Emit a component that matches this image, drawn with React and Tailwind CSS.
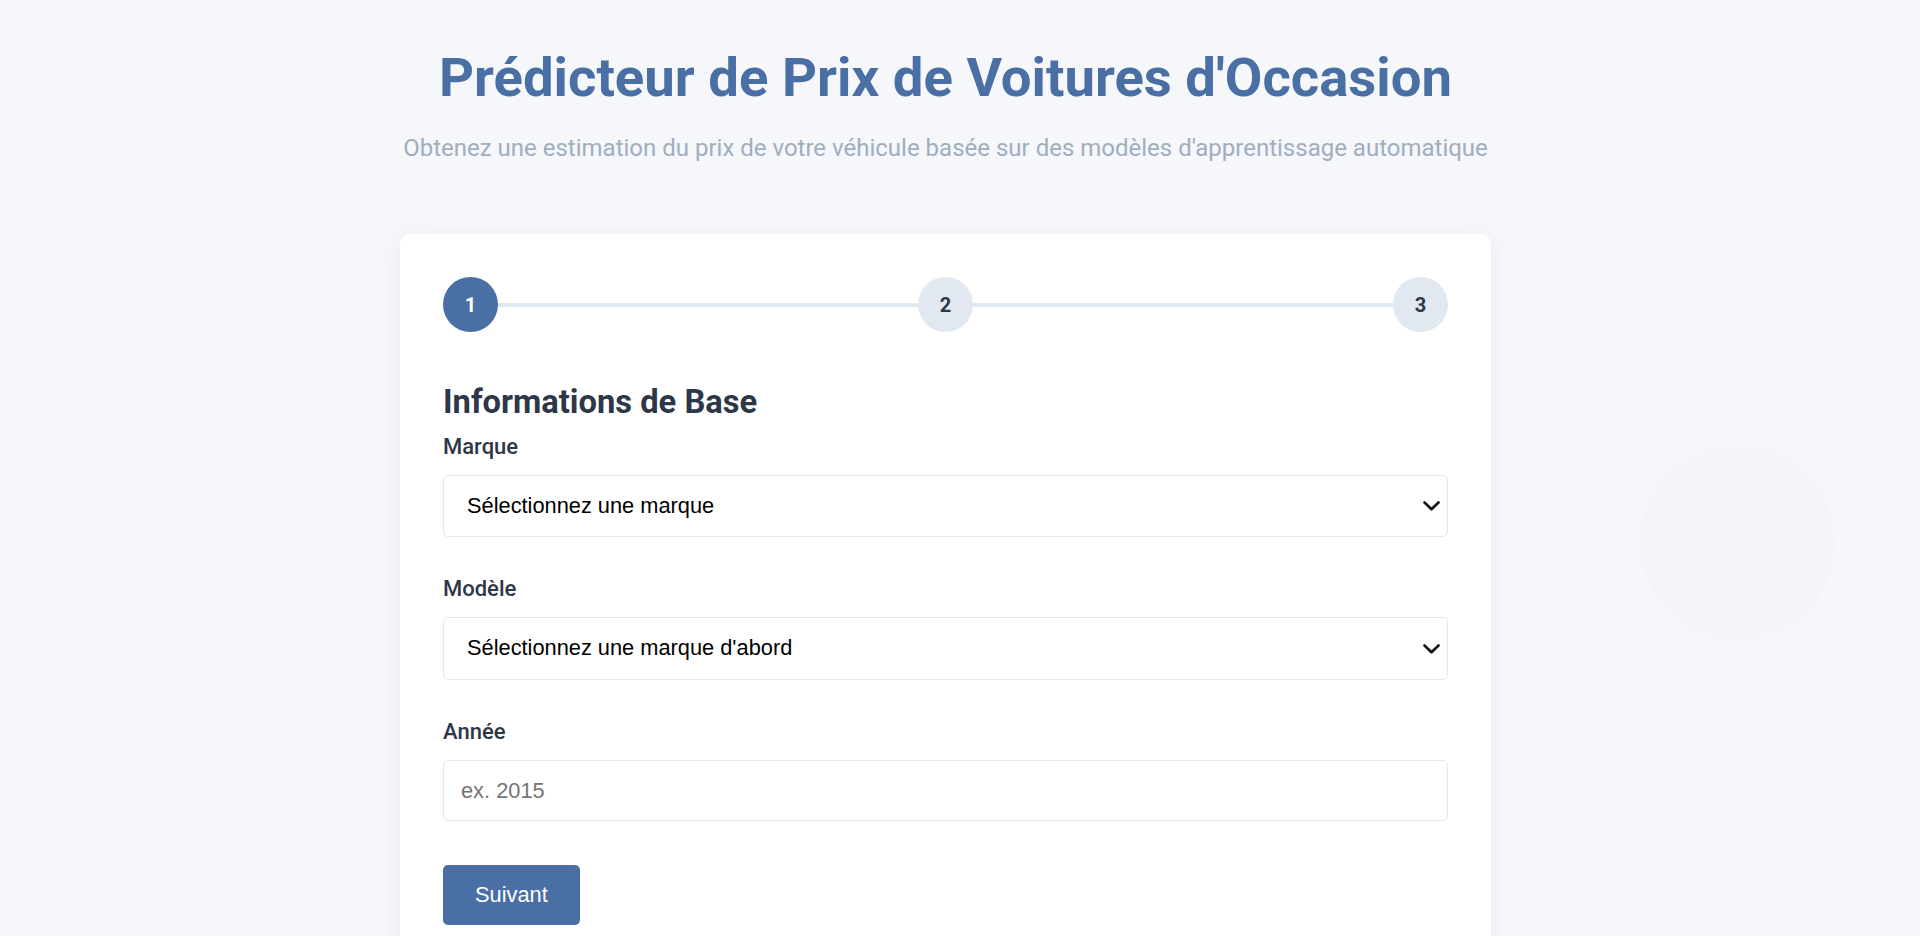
import { useState } from 'react';

const Chevron = () => (
  <svg
    className="pointer-events-none absolute right-[8px] top-1/2 -translate-y-1/2"
    width="17"
    height="10"
    viewBox="0 0 17 10"
    fill="none"
  >
    <path d="M1.5 1.5 L8.5 8.3 L15.5 1.5" stroke="#111" strokeWidth="2.6" strokeLinecap="round" strokeLinejoin="round" />
  </svg>
);

const Step = ({ n, active }) => (
  <div
    className={`w-[55px] h-[55px] shrink-0 rounded-full flex items-center justify-center text-[20px] font-bold ${
      active ? 'bg-[#4a6fa5] text-white' : 'bg-[#e2e8f0] text-[#2d3748]'
    }`}
  >
    {n}
  </div>
);

const Field = ({ label, children, className = '' }) => (
  <div className={className}>
    <label className="block text-[22px] leading-[26px] font-medium text-[#2d3748] mb-[15px]">{label}</label>
    {children}
  </div>
);

export default function App() {
  const [brand, setBrand] = useState('');
  const [model, setModel] = useState('');
  const [year, setYear] = useState('');

  return (
    <div className="relative min-h-screen overflow-hidden bg-[#f5f7fa] font-['Roboto',sans-serif]">
      {/* faint decorative blob */}
      <div className="absolute left-[1640px] top-[445px] w-[195px] h-[195px] rounded-full bg-[#f2f4f8]/60" />

      <div className="relative flex justify-center pr-[29px] pt-[44px]">
        <div className="w-[1091px] flex flex-col items-center">
          <h1 className="text-[54.5px] leading-[66px] font-bold text-[#4a6fa5] text-center whitespace-nowrap">
            Prédicteur de Prix de Voitures d'Occasion
          </h1>
          <p className="mt-[20px] text-[24px] leading-[36px] text-[#a0aec0] text-center whitespace-nowrap">
            Obtenez une estimation du prix de votre véhicule basée sur des modèles d'apprentissage automatique
          </p>

          <div className="mt-[68px] w-full bg-white rounded-[10px] shadow-[0_4px_24px_rgba(30,41,59,0.06)] px-[43px] pt-[43px] pb-[60px]">
            <div className="flex items-center">
              <Step n="1" active />
              <div className="flex-1 h-[4px] bg-[#e2e8f0]" />
              <Step n="2" />
              <div className="flex-1 h-[4px] bg-[#e2e8f0]" />
              <Step n="3" />
            </div>

            <h2 className="mt-[50px] text-[32.7px] leading-[40px] font-bold text-[#2d3748]">Informations de Base</h2>

            <Field label="Marque" className="mt-[12px]">
              <div className="relative">
                <select
                  value={brand}
                  onChange={(e) => setBrand(e.target.value)}
                  className="appearance-none w-full h-[62px] pl-[23px] pr-[40px] bg-white border border-[#e2e8f0] rounded-[5px] text-[21.8px] text-black font-['Liberation_Sans',Arial,sans-serif] outline-none"
                >
                  <option value="">Sélectionnez une marque</option>
                  <option value="toyota">Toyota</option>
                  <option value="renault">Renault</option>
                  <option value="peugeot">Peugeot</option>
                </select>
                <Chevron />
              </div>
            </Field>

            <Field label="Modèle" className="mt-[39px]">
              <div className="relative">
                <select
                  value={model}
                  onChange={(e) => setModel(e.target.value)}
                  className="appearance-none w-full h-[63px] pl-[23px] pr-[40px] bg-white border border-[#e2e8f0] rounded-[5px] text-[21.8px] text-black font-['Liberation_Sans',Arial,sans-serif] outline-none"
                >
                  <option value="">Sélectionnez une marque d'abord</option>
                </select>
                <Chevron />
              </div>
            </Field>

            <Field label="Année" className="mt-[39px]">
              <input
                type="number"
                value={year}
                onChange={(e) => setYear(e.target.value)}
                placeholder="ex. 2015"
                className="w-full h-[61px] px-[17px] bg-white border border-[#e2e8f0] rounded-[5px] text-[21.8px] text-black placeholder:text-[#757575] font-['Liberation_Sans',Arial,sans-serif] outline-none"
              />
            </Field>

            <button className="mt-[44px] h-[60px] px-[32px] rounded-[5px] bg-[#4a6fa5] text-white text-[21.8px] font-['Liberation_Sans',Arial,sans-serif]">
              Suivant
            </button>
          </div>
        </div>
      </div>
    </div>
  );
}
